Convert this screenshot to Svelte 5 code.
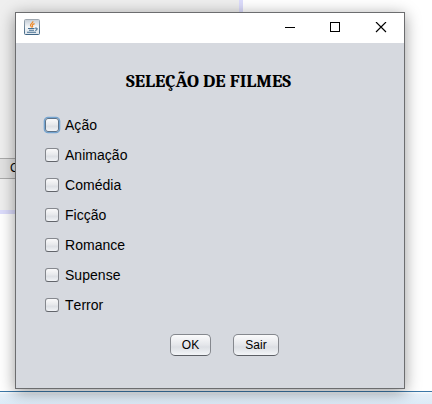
<script>
  const genres = ['Ação', 'Animação', 'Comédia', 'Ficção', 'Romance', 'Supense', 'Terror'];
</script>

<div class="desktop">
  <div class="back">
    <div class="panel"><div class="behind">C</div></div>
  </div>
  <div class="status"></div>

  <div class="window">
    <header>
      <svg class="java" width="16" height="16" viewBox="0 0 16 16">
        <defs>
          <linearGradient id="jg" x1="0" y1="0" x2="0" y2="1">
            <stop offset="0" stop-color="#c3ccd5" />
            <stop offset="0.5" stop-color="#f4f6f8" />
            <stop offset="1" stop-color="#dbe3ea" />
          </linearGradient>
          <linearGradient id="js" x1="0" y1="0" x2="0" y2="1">
            <stop offset="0" stop-color="#a0a9b2" />
            <stop offset="1" stop-color="#3f6585" />
          </linearGradient>
        </defs>
        <rect x="0.5" y="0.5" width="15" height="15" rx="1" fill="url(#jg)" stroke="url(#js)" />
        <path d="M9 2.3C9 4.3 6.3 4.6 6.5 6.3C6.6 7.2 7.4 7.6 7.6 8.5M10.6 4.6C9 5.2 8 5.8 8.5 6.8C8.9 7.5 8.6 7.9 8.3 8.3" fill="none" stroke="#ee8a2a" stroke-width="1.2" />
        <path d="M4 9.5H10.5M5 11.3H10M3 13.3H12M11 9.2C14 8.4 13.8 11 11.2 11.5" fill="none" stroke="#456f92" stroke-width="1.1" />
      </svg>
      <svg class="controls" width="102" height="12" viewBox="0 0 102 12" fill="none" stroke="#000" shape-rendering="crispEdges">
        <path d="M0 5.5H10" />
        <rect x="45.5" y="0.5" width="9" height="9" />
        <path d="M91 0L101 10M101 0L91 10" shape-rendering="auto" stroke-width="1.15" />
      </svg>
    </header>
    <main>
      <h1><svg width="168" height="24"><text x="1" y="18" textLength="165" lengthAdjust="spacingAndGlyphs">SELEÇÃO DE FILMES</text></svg></h1>
      <div class="list">
        {#each genres as genre, i}
          <div class="option"><span class="box" class:focused={i === 0}></span><span>{genre}</span></div>
        {/each}
      </div>
      <div class="actions">
        <button class="ok">OK</button>
        <button class="exit">Sair</button>
      </div>
    </main>
  </div>
</div>

<style>
  .desktop {
    position: relative;
    width: 432px;
    height: 404px;
    overflow: hidden;
    display: flex;
    flex-direction: column;
    background: #fff;
    font-family: "Liberation Sans", Arial, sans-serif;
    color: #000;
  }
  .back { height: 391px; flex: none; }
  .panel {
    box-sizing: border-box;
    width: 243px;
    height: 214px;
    padding-top: 158px;
    border-right: 4px solid #dcdcfc;
    border-bottom: 4px solid #dcdcfc;
    background: #efefef;
  }
  .behind {
    box-sizing: border-box;
    height: 21px;
    padding-left: 10px;
    border: solid #aaa;
    border-width: 1px 0;
    background: #e2e2e2;
    font-size: 12px;
    line-height: 19px;
  }
  .status {
    box-sizing: border-box;
    height: 13px;
    border-top: 1px solid #3d78a8;
    background: linear-gradient(#f4f9fd 0 1px, #e6f0f9 2px, #dcebf7);
  }
  .window {
    position: absolute;
    left: 15px;
    top: 12px;
    box-sizing: border-box;
    width: 390px;
    height: 377px;
    border: 1px solid #6c6d6f;
    background: #d6d9df;
    box-shadow: 0 3px 15px rgba(0, 0, 0, 0.4);
  }
  header {
    box-sizing: border-box;
    height: 30px;
    padding: 6px 17px 0 8px;
    display: flex;
    justify-content: space-between;
    background: #fff;
  }
  .controls { margin-top: 3px; }
  main { display: flex; flex-direction: column; }
  h1 {
    margin: 26px 0 0 109px;
    height: 24px;
    font: bold 17.5px Cambria, Caladea, "Liberation Serif", serif;
  }
  h1 svg { display: block; }
  .list { margin: 17px 0 0 29px; }
  .option {
    display: flex;
    align-items: center;
    gap: 6px;
    height: 30px;
    font-size: 14px;
    line-height: 16px;
    font-kerning: none;
    letter-spacing: 0.03px;
  }
  .box {
    box-sizing: border-box;
    width: 14px;
    height: 14px;
    border: 1px solid #85888e;
    border-bottom-color: #62656b;
    border-radius: 3px;
    background: linear-gradient(#fafafb, #e6e8eb 50%, #dcdfe4 60%, #f2f4f7);
  }
  .focused {
    border-color: #5d7288;
    box-shadow: 0 0 0 1.3px #73a4d1;
  }
  .actions {
    display: flex;
    gap: 22px;
    margin: 14px 0 0 154px;
  }
  button {
    box-sizing: border-box;
    height: 22px;
    margin: 0;
    padding: 0;
    border: 1px solid #85888e;
    border-bottom-color: #5c5f65;
    border-radius: 5px;
    background: linear-gradient(#fbfbfc, #e4e6ea 50%, #dcdfe4 60%, #f3f5f8);
    font: 12px "Liberation Sans", Arial, sans-serif;
    line-height: 20px;
    color: #000;
  }
  .ok { width: 41px; }
  .exit { width: 46px; letter-spacing: 0.1px; }
</style>
